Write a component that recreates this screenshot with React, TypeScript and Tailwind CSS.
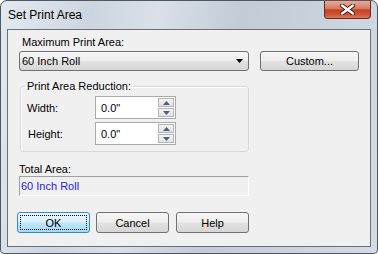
const font = "font-['Liberation_Sans',Arial,sans-serif]";

const btnFace =
  "bg-[linear-gradient(#f6f6f6_0%,#eeeeee_48%,#e2e2e2_52%,#d6d6d6_100%)] border border-[#707070] rounded-[3px]";

function Arrow({ up }: { up?: boolean }) {
  return (
    <svg width="7" height="4" viewBox="0 0 7 4">
      <path d={up ? "M0 4 L3.5 0 L7 4 Z" : "M0 0 L7 0 L3.5 4 Z"} fill="#4d5f82" />
    </svg>
  );
}

function Spin({ value }: { value: string }) {
  return (
    <div className="flex h-[23px] w-[81px] border border-[#a9a9a9] bg-white">
      <div className="flex flex-1 items-center pl-[5px] text-[11px] text-black">{value}</div>
      <div className="flex w-[18px] flex-col gap-[1px] p-[1px]">
        <div className="flex flex-1 items-center justify-center border border-[#b4b4b4] bg-[linear-gradient(#f4f4f4,#e1e1e1)]">
          <Arrow up />
        </div>
        <div className="flex flex-1 items-center justify-center border border-[#b4b4b4] bg-[linear-gradient(#f4f4f4,#e1e1e1)]">
          <Arrow />
        </div>
      </div>
    </div>
  );
}

export default function App() {
  return (
    <div
      className={`${font} flex h-[254px] w-[378px] flex-col overflow-hidden rounded-t-[7px] rounded-b-[4px] border border-[#4f5862] bg-[linear-gradient(100deg,#e3e9f0_0%,#cdd6e0_22%,#d9e0e8_38%,#c2cbd6_58%,#cbd3dd_80%,#d3dbe4_100%)]`}
    >
      {/* title bar */}
      <div className="flex h-[28px] items-start">
        <span className="pl-[7px] pt-[7px] text-[12px] leading-[14px] text-black">Set Print Area</span>
        <div className="ml-auto mr-[6px] flex h-[18px] w-[47px] items-center justify-center rounded-b-[4px] border border-t-0 border-[#6b2a1e] bg-[linear-gradient(#eaa998_0%,#d67a64_45%,#c3401f_52%,#cf5536_80%,#dd7a5c_100%)]">
          <svg width="15" height="11" viewBox="0 0 15 11">
            <path d="M2 1.5 L13 9.5 M13 1.5 L2 9.5" stroke="#3b1c15" strokeWidth="4.2" strokeLinecap="round" />
            <path d="M2 1.5 L13 9.5 M13 1.5 L2 9.5" stroke="#ffffff" strokeWidth="2.4" strokeLinecap="round" />
          </svg>
        </div>
      </div>

      {/* client area */}
      <div className="mx-[6px] mb-[6px] flex flex-1 flex-col border border-[#66717e] bg-[#f0f0f0] pt-[5px] text-[11px] leading-[14px] text-black">
        <div className="ml-[14px]">Maximum Print Area:</div>

        <div className="mt-[2px] flex">
          <div className={`ml-[11px] flex h-[20px] w-[230px] items-center ${btnFace}`}>
            <span className="pl-[2px]">60 Inch Roll</span>
            <svg className="ml-auto mr-[5px]" width="7" height="4" viewBox="0 0 7 4">
              <path d="M0 0 L7 0 L3.5 4 Z" fill="#000" />
            </svg>
          </div>
          <div className={`ml-[11px] flex h-[20px] w-[99px] items-center justify-center ${btnFace}`}>
            Custom...
          </div>
        </div>

        <fieldset className="ml-[12px] mt-[9px] w-[229px] rounded-[3px] border border-[#d5d9de] pb-[6px] shadow-[inset_1px_1px_0_#ffffff]">
          <legend className="ml-[4px] px-[2px] leading-[12px]">Print Area Reduction:</legend>
          <div className="mt-[4px] flex flex-col gap-[3px]">
            <div className="flex items-center">
              <span className="w-[74px] pl-[6px]">Width:</span>
              <Spin value={'0.0"'} />
            </div>
            <div className="flex items-center">
              <span className="w-[74px] pl-[7px]">Height:</span>
              <Spin value={'0.0"'} />
            </div>
          </div>
        </fieldset>

        <div className="ml-[11px] mt-[10px]">Total Area:</div>
        <div className="ml-[11px] flex h-[20px] w-[230px] items-center border border-b-white border-l-[#a0a0a0] border-r-white border-t-[#a0a0a0] pl-[1px] text-[#2323e8]">
          60 Inch Roll
        </div>

        <div className="ml-[9px] mt-[16px] flex">
          <div className="flex h-[21px] w-[73px] rounded-[3px] border border-[#2c8ec9] bg-[linear-gradient(#eaf6fd_0%,#d9f0fc_48%,#bee6fd_52%,#a7d9f5_100%)] p-[2px]">
            <div className="flex flex-1 items-center justify-center border border-dotted border-black">OK</div>
          </div>
          <div className={`ml-[6px] flex h-[21px] w-[73px] items-center justify-center ${btnFace}`}>Cancel</div>
          <div className={`ml-[7px] flex h-[21px] w-[73px] items-center justify-center ${btnFace}`}>Help</div>
        </div>
      </div>
    </div>
  );
}
